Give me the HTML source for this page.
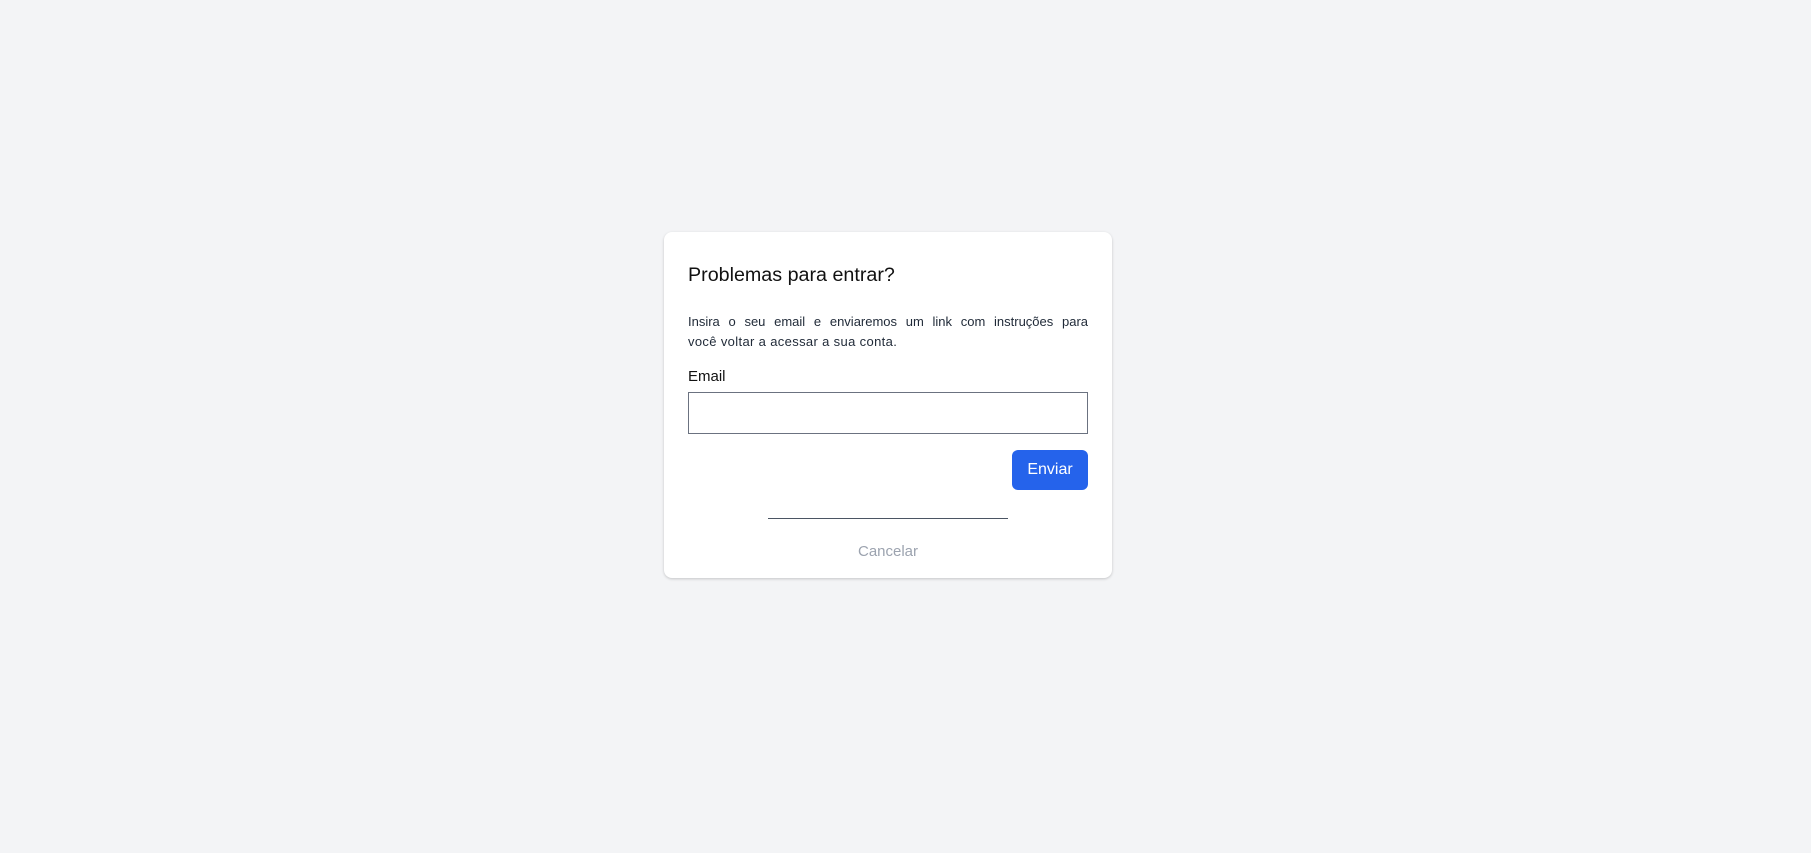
<!DOCTYPE html>
<html><head><meta charset="utf-8"><style>
html,body{margin:0;padding:0;width:1811px;height:853px;background:#f3f4f6;font-family:"Liberation Sans",sans-serif;overflow:hidden}
.card{position:absolute;left:664px;top:232px;width:448px;height:346px;background:#fff;border-radius:8px;box-shadow:0 1px 3px rgba(0,0,0,.12),0 1px 2px rgba(0,0,0,.08)}
.t{position:absolute;left:24px;top:32px;font-size:19.7px;color:#111}
.p{position:absolute;left:24px;top:80px;width:400px;font-size:13px;line-height:20px;color:#1f2937}
.p .a{text-align:justify;text-align-last:justify;white-space:nowrap}
.p .b2{letter-spacing:0.35px}
.l{position:absolute;left:24px;top:136px;font-size:15px;color:#111}
.i{position:absolute;left:24px;top:160px;width:398px;height:40px;border:1px solid #6b7280}
.b{position:absolute;left:348px;top:218px;width:76px;height:40px;background:#2563eb;border-radius:6px;color:#fff;font-size:16px;line-height:40px;text-align:center}
.hr{position:absolute;left:104px;top:286px;width:240px;height:1px;background:#4b5563}
.c{position:absolute;left:0;width:448px;top:311px;text-align:center;font-size:15px;color:#9ca3af}
</style></head><body>
<div class="card">
<div class="t">Problemas para entrar?</div>
<div class="p"><div class="a">Insira o seu email e enviaremos um link com instruções para</div><div class="b2">você voltar a acessar a sua conta.</div></div>
<div class="l">Email</div>
<div class="i"></div>
<div class="b">Enviar</div>
<div class="hr"></div>
<div class="c">Cancelar</div>
</div>
</body></html>
